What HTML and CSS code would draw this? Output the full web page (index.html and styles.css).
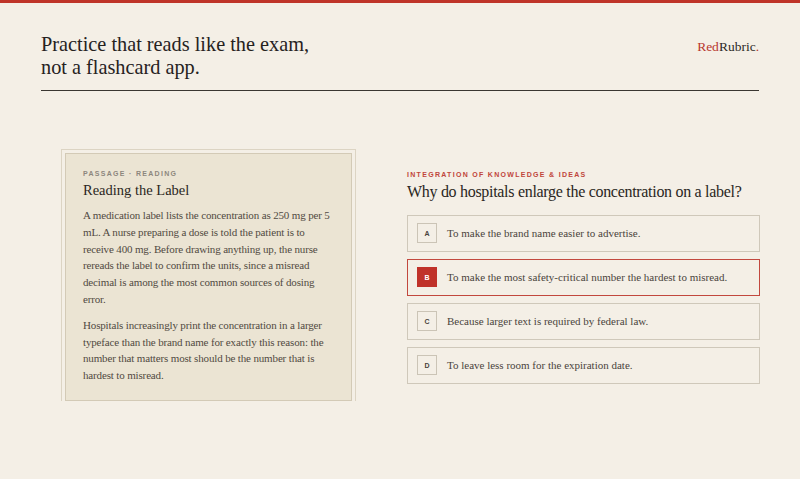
FILE: index.html
```html
<!DOCTYPE html>
<html lang="en">
<head>
    <meta charset="UTF-8">
    <meta name="viewport" content="width=device-width, initial-scale=1.0">
    <title>RedRubric</title>
    <link rel="stylesheet" href="styles.css">
</head>
<body>
    <div class="topbar"></div>
    <header class="header">
        <h1 class="headline">Practice that reads like the exam,<br>not a flashcard app.</h1>
        <div class="logo"><span class="logo-red">Red</span>Rubric<span class="logo-red">.</span></div>
    </header>

    <main class="practice">
        <section class="passage">
            <div class="kicker">Passage · Reading</div>
            <h2 class="passage-title">Reading the Label</h2>
            <p>A medication label lists the concentration as 250 mg per 5 mL. A nurse preparing a dose is told the patient is to receive 400 mg. Before drawing anything up, the nurse rereads the label to confirm the units, since a misread decimal is among the most common sources of dosing error.</p>
            <p>Hospitals increasingly print the concentration in a larger typeface than the brand name for exactly this reason: the number that matters most should be the number that is hardest to misread.</p>
        </section>

        <section class="question">
            <div class="kicker red">Integration of Knowledge &amp; Ideas</div>
            <h2 class="question-title">Why do hospitals enlarge the concentration on a label?</h2>
            <div class="options">
                <div class="option"><span class="letter">A</span>To make the brand name easier to advertise.</div>
                <div class="option selected"><span class="letter">B</span>To make the most safety-critical number the hardest to misread.</div>
                <div class="option"><span class="letter">C</span>Because larger text is required by federal law.</div>
                <div class="option"><span class="letter">D</span>To leave less room for the expiration date.</div>
            </div>
        </section>
    </main>
</body>
</html>
```

FILE: styles.css
```css
body {
    margin: 0;
    background: #f4efe6;
    font-family: 'Liberation Serif', serif;
    color: #2a2622;
}
.topbar {
    height: 3px;
    background: #bf3429;
}
.header {
    margin: 0 41px;
    padding-top: 30px;
    height: 57px;
    border-bottom: 1px solid #3a3631;
    display: flex;
    justify-content: space-between;
    align-items: flex-start;
}
.headline {
    margin: 0;
    font-weight: normal;
    font-size: 20.3px;
    line-height: 23px;
    color: #26221e;
}
.logo {
    margin-top: 6px;
    font-size: 13.5px;
    color: #2e2a26;
}
.logo-red {
    color: #b8382e;
}
.practice {
    display: grid;
    grid-template-columns: 287px 353px;
    column-gap: 55px;
    align-items: center;
    margin: 62px 0 0 65px;
}
.passage {
    background: #ebe4d3;
    border: 1px solid #d3cab6;
    outline: 1px solid #dcd4c3;
    outline-offset: 3px;
    padding: 16px 17px 20px 17px;
    height: 210px;
}
.kicker {
    font-family: 'Liberation Sans', sans-serif;
    font-size: 7px;
    font-weight: bold;
    letter-spacing: 1.3px;
    text-transform: uppercase;
    color: #8d877d;
}
.kicker.red {
    color: #c0463b;
}
.passage-title {
    margin: 5px 0 8px;
    font-weight: normal;
    font-size: 14.5px;
    color: #2a2622;
}
.passage p {
    margin: 0 0 9px;
    font-size: 11px;
    line-height: 16.8px;
    letter-spacing: -0.15px;
    color: #514a42;
}
.question-title {
    margin: 5px 0 14px;
    font-weight: normal;
    font-size: 16px;
    letter-spacing: -0.3px;
    white-space: nowrap;
    color: #2a2622;
}
.options {
    display: flex;
    flex-direction: column;
    gap: 7px;
}
.option {
    display: flex;
    align-items: center;
    height: 35px;
    padding-left: 9px;
    border: 1px solid #cfc8ba;
    font-size: 11px;
    color: #4a443c;
}
.letter {
    width: 18px;
    height: 18px;
    margin-right: 10px;
    border: 1px solid #cbc4b6;
    display: flex;
    align-items: center;
    justify-content: center;
    font-family: 'Liberation Sans', sans-serif;
    font-size: 7px;
    font-weight: bold;
    color: #4a443c;
}
.option.selected {
    border-color: #c2483e;
}
.option.selected .letter {
    background: #c0322a;
    border-color: #c0322a;
    color: #fff;
}
```
